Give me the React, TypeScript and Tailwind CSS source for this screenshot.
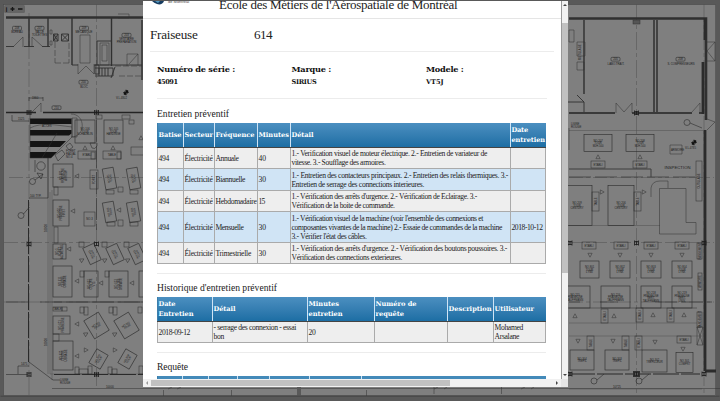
import React, { useLayoutEffect, useRef } from "react";

const SERIF = "font-['Liberation_Serif',serif]";

/* One line of text, tracked out or in so that it spans exactly w pixels. */
function Line({ w, children, className = "" }: { w: number; children: string; className?: string }) {
  const ref = useRef<HTMLSpanElement>(null);
  useLayoutEffect(() => {
    const el = ref.current;
    if (!el) return;
    el.style.letterSpacing = "0px";
    const natural = el.getBoundingClientRect().width;
    el.style.letterSpacing = `${(w - natural) / children.length}px`;
  }, [w, children]);
  return (
    <span className={`block whitespace-nowrap ${className}`}>
      <span ref={ref}>{children}</span>
    </span>
  );
}

type L = [string, number];
type Box = [number, number, number, number, string[], number?];

const machines: Box[] = [
  [75, 120, 20, 23, ["NO.106", "TOUR", "SCHAUBLIN"]],
  [104, 120, 19, 23, ["NO.105", "TOUR", "HARDINGE"]],
  [53, 164, 20, 23, ["NO.601", "FRAISEUSE", "ARROW"], 90],
  [53, 200, 16, 26, ["NO.602", "FRAISEUSE", "FIRST"], 90],
  [53, 244, 13, 15, ["NO.5", "FORET", "ALZMETALL"], 90],
  [53, 266, 19, 31, ["NO.611", "CENTRE", "USINAGE"], 90],
  [84, 271, 14, 26, ["NO.612", "CENTRE", "VT5"], 90],
  [109, 271, 19, 26, ["NO.613", "CENTRE", "USINAGE"], 90],
  [139, 271, 19, 26, ["NO.614", "CENTRE"], 90],
  [53, 316, 17, 18, ["NO.621", "FRAISEUSE"], 90],
  [53, 341, 20, 29, ["NO.622", "CENTRE", "USINAGE"], 90],
  [104, 168, 11, 21, ["NO.301", "TOUR"], -10],
  [128, 168, 11, 21, ["NO.302", "TOUR"], -10],
  [104, 202, 11, 20, ["NO.303", "TOUR"], -10],
  [128, 202, 11, 20, ["NO.304", "TOUR"], -10],
  [86, 245, 12, 18, ["NO.401", "TOUR"], -25],
  [109, 245, 12, 18, ["NO.402", "TOUR"], -25],
  [131, 245, 12, 18, ["NO.403", "TOUR"], -25],
  [88, 315, 17, 21, ["NO.501", "TOUR"], -31],
  [118, 315, 17, 21, ["NO.502", "TOUR"], -31],
  [92, 351, 13, 16, ["NO.503", "TOUR"], 30],
  [121, 351, 13, 16, ["NO.504", "TOUR"], 30],
  [584, 134.5, 28, 17, ["NO.207", "TOUR", "MJH.500"]],
  [626, 134.5, 28, 17, ["NO.208", "TOUR", "MJH.500"]],
  [562, 185.5, 30, 40, ["NO.209", "TOUR", "CENTURY"]],
  [608, 185.5, 26, 40, ["NO.206", "TOUR", "CENTURY"]],
  [580, 261, 19, 17, ["NO.801", "TOUR", "LYNX"]],
  [610, 261, 20, 17, ["NO.802", "TOUR", "LYNX"]],
  [641, 261, 20, 17, ["NO.803", "TOUR", "LYNX"]],
  [672, 261, 20, 17, ["NO.804", "TOUR", "LYNX"]],
  [560, 286, 30, 22, ["NO.215", "FRAISEUSE", "TAUFFMANN"]],
  [601, 286, 29, 22, ["NO.216", "FRAISEUSE", "TAUFFMANN"]],
  [641, 286, 20, 22, ["NO.218", "FRAISEUSE", "VERT.", "TAUFFMANN"]],
  [672, 286, 20, 22, ["NO.219", "FRAISEUSE", "VERT.", "UNIV."]],
  [570, 350, 24, 20, ["NO.304", "TREFIL"]],
  [605, 350, 24, 20, ["NO.303", "TREFIL"]],
  [642, 350, 25, 22, ["NO.302", "TREFILLEUR"]],
  [676, 352.5, 17, 20, ["NO.301", "COMPRT"]],
];

const benches: [number, number, number, number, string?, number?][] = [
  [78, 151, 18, 8, "ETABLI"], [103, 151, 18, 8, "TABLE"], [131, 147, 18, 8],
  [591, 161, 14, 7, "ETABLI"], [633, 161, 14, 7, "ETABLI"],
  [582, 242, 14, 7, "ETABLI"], [614, 242, 14, 7, "ETABLI"], [644, 242, 14, 7, "ETABLI"], [675, 242, 14, 7, "ETABLI"],
  [592, 192, 7, 19, "TABLE", 90], [634, 192, 7, 19, "TABLE", 90],
  [601, 309, 7, 14, "ETABLI", 90], [636, 308, 7, 14, "ETABLI", 90], [667, 308, 7, 14, "ETABLI", 90],
  [587, 336, 7, 14, "TABLE", 90], [622, 336, 7, 14, "TABLE", 90], [635, 336, 7, 14, "ETABLI", 90],
  [677, 336, 14, 7, "ETABLI"], [696, 161, 6, 40, "OUTILLAGE", 90],
  [697, 243, 5, 16, "RANGEMENT", 90], [698, 273, 4, 17, "ARMOIRE", 90], [697, 312, 5, 15, "RANGEMENT", 90],
  [90, 170, 8, 19, "FORET", 90], [84, 212, 11, 14, "NO.3"], [54, 227, 4, 16], [54, 187, 4, 8],
  [53, 307, 9, 4, "TABLE"], [62, 307, 5, 4], [53, 334, 6, 7], [91, 152, 4, 7], [117, 152, 4, 7],
  [107, 222, 8, 4], [118, 220, 5, 6], [130, 222, 8, 4], [106, 190, 8, 4], [118, 187, 5, 5], [130, 190, 8, 4],
  [79, 242, 5, 5], [102, 242, 5, 5], [124, 242, 5, 5], [80, 271, 4, 6], [105, 271, 4, 6],
  [80, 307, 4, 6], [84, 307, 4, 8], [109, 307, 4, 6], [113, 307, 4, 8], [138, 307, 4, 6],
  [75, 367, 4, 7], [79, 369, 9, 5], [88, 366, 4, 8], [108, 367, 4, 7], [112, 369, 5, 5], [139, 366, 4, 8],
  [96, 115, 6, 4], [122, 115, 8, 4], [129, 120, 5, 4],
];

const tris: [number, number, number][] = [
  [85, 148, 0], [113, 148, 0], [77, 176, -90], [73, 211, -90], [69, 249, -90], [77, 281, -90], [101, 283, -90],
  [132, 283, -90], [77, 324, -90], [77, 356, -90], [86, 334, 60], [115, 334, 60], [86, 350, 90], [115, 350, 90],
  [82, 260, 60], [105, 260, 60], [128, 260, 60], [119, 210, -90], [141, 138, 0],
  [598, 157, 0], [640, 157, 0], [602, 192, 90], [644, 192, 90],
  [590, 255, 180], [620, 255, 180], [651, 255, 180], [682, 255, 180],
  [575, 316, 0], [614, 316, 0], [653, 315, 0], [684, 315, 0],
  [578, 341, 180], [613, 341, 180], [655, 342, 180], [683, 349, 180],
];

const labels: [number, number, string, number][] = [
  [17, 29, "208", 1], [17, 33, "BUREAU", 0], [39.5, 29, "207", 1], [39.5, 33, "SALLE", 0], [39.5, 36, "TOILETTES", 0],
  [84, 29, "209", 1], [84, 33, "MECANIQUE", 0], [126.5, 36, "203", 1], [126.5, 40, "VESTIAIRE", 0], [126.5, 43, "PREPARATION", 0],
  [83.5, 83, "200", 1], [84, 87.5, "BLOC", 0], [56.5, 108.5, "210", 1],
  [615.5, 60, "205", 1], [616, 64.5, "LABO.TRAIT.", 0], [680.5, 60, "208", 1], [681, 64.5, "S. COMPRESSEURS", 0],
];

function FloorPlan() {
  return (
    <svg className="h-full w-full" viewBox="0 0 720 401" fill="none" stroke="#303030" strokeWidth=".5" fontFamily="Liberation Sans, sans-serif">
      <rect width="720" height="401" fill="#595959" stroke="none" />
      <rect x="3.7" y="4.7" width="712" height="391" fill="#7f7f7f" stroke="#484848" />
      <g stroke="#505050" strokeWidth=".5">
        <path d="M29 13V396M96.500 4V387M636.500 4V396M704 4V396" strokeDasharray="18 3 4 3" />
        <path d="M4 242.500H143M569 242.500H714M4 302H143M569 302H714M569 177.500H714M9 177.500H143" strokeDasharray="14 3 4 3" />
        <path d="M569 130.500H703M50 192V374H143M48 158V374M52 190V380M569 225.500H660M569 323H697M569 336H702M569 389H702M569 169H651V177" />
      </g>
      <g stroke="#404040" strokeWidth=".8">
        <path d="M96.500 120V230M569 177H696M6 302H28M40 302H143M569 302H580M600 302H618M655 302H712" strokeDasharray="22 4" />
        <path d="M569 169H651V177M54 302H143" />
      </g>
      {/* outer walls */}
      <path d="M6 17.500H143M569 18.500H706V120" stroke="#303030" strokeWidth="2.600" />
      <path d="M6 112.500H36M43 112.500H143M569 113H615M632 113H692M699 113H704" stroke="#242424" strokeWidth="1.500" />
      <path d="M705 18V40M703 62V114M705 130V371M705 371H716" stroke="#2b2b2b" strokeWidth="2.800" />
      <path d="M654 20V112M657 20V112" stroke="#303030" strokeWidth="1.500" />
      <path d="M29 18V47M48 18V47M72 18V65M111.500 18V66M142 20V80M584 20V94" stroke="#303030" strokeWidth="1.400" />
      <path d="M6 46.500H14M24 46.500H34M42 46.500H50M72 65H78M94 65H142M97 65V41H111M577 95L584 102V112M567 102H584" strokeWidth=".9" />
      <path d="M23 47V37L14 46M32 47V37L42 46M78 64V74L86 66L94 74V64M127 66V54H138V66M138 54L129 64M41 112V103L32 112M616 113V103L624 112L632 103V113M700 113V103L692 112M707 42H715V61H707M715 42L707 51L715 61M707 119L715 122L707 130" />
      <path d="M80 35h10v28H80zM100 43h9v22h-9zM102 45h5v16h-5zM50 30h2v4h-2zM50 41h2v4h-2zM569 30h5v12h-5zM577 42h8v14h-8zM577 62h7v8h-7zM72 118h5v19h-5zM118 14h11v4h-11" />
      <path d="M55 34V63M69 43V63M55 63H69M115 66H142M119 76H142" strokeDasharray="6 2" />
      <path d="M53.500 34h4.500v7h-4.500zM53.500 34l4.500 7m0-7l-4.500 7M61.500 34h7v7h-7zM61.500 34l7 7m0-7l-7 7M95 68h18v8H95M99 68v8M102 68v8M105 68v8M108 68v8M111 78l4-11M95 65h4v9h-4z" strokeWidth=".9" />
      {/* hatched loading area */}
      <path d="M30 118.500H71.500V124H30zM30 130H71.500V133.500L69 135.500H30zM30 141H66L60 147H30zM30 152H57L51 158H30z" fill="#141414" stroke="none" />
      <path d="M30 114V158L51 158L72 137V118M30 128C42 122 55 125 72 127M42 158L57 133M71 114C86 114 86 137 71 137" />
      <g stroke="#1c1c1c">
        <path d="M29 98H43M12 121H29M29 97V101M43 97V101M12 115V121M48 158V198H29M35 160V172" strokeWidth=".5" />
        <circle cx="41" cy="166" r="4.200" /><circle cx="32.500" cy="181.500" r="3" /><path d="M35 180l8-6m-6-1l6 1-2 5z" />
        <circle cx="21" cy="215.500" r="3" /><path d="M23.500 214l6-7M29 362L53 380H60M18 366H29M18 366V374M6 374.500H28" />
        <circle cx="687" cy="122.500" r="3" /><path d="M690 123L702 128" />
        <circle cx="594" cy="381" r="3" /><path d="M597 380l7-6" /><circle cx="639" cy="381" r="3" /><path d="M642 380l7-6" />
      </g>
      <path d="M54 374.500H143M569 374H700M28.500 200V362" stroke="#2a2a2a" strokeWidth="1" strokeDasharray="26 2" />
      <path d="M569 128V150" />
      {[[29, 112.500], [96.500, 112.500], [29, 244], [96.500, 244], [29, 374.500], [96.500, 374.500], [636.500, 113], [636.500, 243], [636.500, 374], [570, 243], [570, 374], [704, 243], [704, 374]].map(([x, y], i) => (
        <path key={i} d={`M${x - 2} ${y - 1.500}h4m-4 3h4M${x} ${y - 2}v4M${x - 2} ${y - 2.500}v5m4-5v5`} stroke="#1c1c1c" strokeWidth=".8" />
      ))}
      <rect x="633" y="20" width="7" height="4" fill="#555" />
      <rect x="633.5" y="371.5" width="6" height="5" strokeWidth="1" />
      {/* compass markers */}
      {[[126, 92.500], [694, 142.500]].map(([x, y], i) => (
        <g key={i} stroke="#111"><circle cx={x} cy={y} r="1.700" /><path d={`M${x - 3} ${y}h6M${x} ${y - 3}v6`} /><path d={`M${x} ${y}v-2h2v2zm0 0v2h-2v-2z`} fill="#111" /></g>
      ))}
      {/* inspection corner */}
      <path d="M651 197V188Q652 181 660 181H668V188M659.500 188.500H686V222.500H696V234H659.500zM670 145h12v9h-12zM697 327h6v18h-6zM697 327l6 18m0-18l-6 18M569 308H697" />
      <path d="M55 155l7-5 3 4-7 7zM66 146l4-3 3 4-4 3zM90 143h7v3q-2 4-5 2z" strokeWidth=".6" />
      {machines.map(([x, y, w, h, t, r = 0], i) => {
        const turned = r === 90;
        return (
          <g key={i} transform={turned ? undefined : `rotate(${r} ${x + w / 2} ${y + h / 2})`} stroke="#2a2a2a">
            <rect x={x} y={y} width={w} height={h} strokeWidth=".6" />
            <g transform={`translate(${x + w / 2} ${y + h / 2}) rotate(${turned || w < 14 ? -90 : 0})`}>
              {t.map((s, k) => (
                <text key={k} y={(k - (t.length - 1) / 2) * 2.500 + 1} fontSize="2.700" textAnchor="middle" fill="#1c1c1c" stroke="none">{s}</text>
              ))}
            </g>
          </g>
        );
      })}
      {benches.map(([x, y, w, h, s, r = 0], i) => (
        <g key={i} stroke="#2c2c2c">
          <rect x={x} y={y} width={w} height={h} />
          {s && <text transform={`translate(${x + w / 2} ${y + h / 2}) rotate(${-r})`} y="1" fontSize="2.700" textAnchor="middle" fill="#1c1c1c" stroke="none">{s}</text>}
        </g>
      ))}
      {tris.map(([x, y, r], i) => (
        <path key={i} d="M0-2.200L2.100 1.700H-2.100z" transform={`translate(${x} ${y}) rotate(${r})`} />
      ))}
      {labels.map(([x, y, s, boxed], i) => (
        <g key={i}>
          {boxed === 1 && <rect x={x - 4.500} y={y - 2.700} width="9" height="3.800" rx="1" stroke="#202020" />}
          <text x={x} y={y} fontSize={boxed ? 2.700 : 2.800} textAnchor="middle" fill="#1a1a1a" stroke="none">{s}</text>
        </g>
      ))}
      <g fill="#1c1c1c" stroke="none" fontSize="2.800">
        <text x="664.500" y="169" fontSize="4.200" textLength="26">INSPECTION</text>
        <text x="685" y="148.500">V.L.4785</text>
        <text x="116" y="98.500">V.L.4802</text>
        <text x="671" y="151">ARMOIRE</text>
        <text x="571" y="125">LIGNE</text><text x="571" y="128">ROUGE</text>
        <text x="32" y="99">1960</text><text x="18" y="120">1525</text>
        <text x="30" y="197">100 TYP.</text>
        <text x="60" y="381">LIGNE</text><text x="60" y="384">ROUGE</text>
        <text x="21" y="365">1475</text><text x="106" y="388">10000</text><text x="613" y="388">10725</text>
        <text x="66" y="152">FORET</text><text x="66" y="155">RADIAL</text><text x="66" y="158">NO.4</text>
        <text x="42" y="127">ACCES</text>
        <text transform="translate(47 232) rotate(-90)">10000</text><text transform="translate(47 346) rotate(-90)">10000</text>
        <text transform="translate(581 60) rotate(-90)">OUTILLAGE</text>
      </g>
      <path d="M52 388.500H720M163.500 390V396M231.500 390V396M366.500 390V396M434 387V394M501.500 387V394M168 389l4-2m5 2l4-2M434 389l4-2m6 2l3-2M521 389l4-2m6 2l3-2" stroke="#333" />
      <rect x="297" y="387" width="4" height="9" fill="#595959" stroke="none" />
      <rect x="4" y="5" width="21" height="8" rx="1.500" fill="#646464" stroke="none" />
      <path d="M10.500 9H14.500M12.500 7V11M18 9H22.500" stroke="#171717" strokeWidth="1.300" />
      <text x="5.500" y="11.500" fontSize="7" fontWeight="bold" fill="#1c1c1c" stroke="none">i</text>
      <path d="M.5 396.200H719.500" stroke="#444" strokeWidth="1" />
    </svg>
  );
}

const COLS1 = "grid-cols-[26px_31px_43px_33px_220px_36px]";
const COLS2 = "grid-cols-[55px_95px_67px_73px_46px_53px]";

function Head({ cells, cols }: { cells: L[][]; cols: string }) {
  return (
    <div className={`grid h-[25px] ${cols} border-b border-[#444444] bg-linear-to-b from-[#4b8fc0] to-[#1c6ea4]`}>
      {cells.map((c, i) => (
        <div key={i} className="flex flex-col justify-center border-l border-[#d0e4f5] pl-[0.5px] font-['DejaVu_Serif',serif] text-[6.6px] leading-[10.3px] font-bold text-white first:border-[#3b7fab]">
          {c.map(([s, w]) => <Line key={s} w={w}>{s}</Line>)}
        </div>
      ))}
    </div>
  );
}

function Row({ cells, cols, height, blue = false }: { cells: L[][]; cols: string; height: string; blue?: boolean }) {
  return (
    <div className={`grid ${height} ${cols} border-r border-b border-[#aaaaaa] ${blue ? "bg-[#d0e4f5]" : "bg-[#eeeeee]"}`}>
      {cells.map((c, i) => (
        <div key={i} className="flex flex-col justify-center border-l border-[#aaaaaa] pl-[0.5px] text-[7.6px] leading-[9px] text-[#222]">
          {c.map(([s, w]) => <Line key={s} w={w}>{s}</Line>)}
        </div>
      ))}
    </div>
  );
}

const rows: { h: string; freq: L; min: string; detail: L[]; date?: L }[] = [
  { h: "h-[21px]", freq: ["Annuale", 23], min: "40", detail: [["1.- Verification visuel de moteur électrique. 2.- Entretien de variateur de", 195.5], ["vitesse. 3.- Soufflage des armoires.", 94]] },
  { h: "h-[22px]", freq: ["Biannuelle", 29.5], min: "30", detail: [["1.- Entretien des contacteurs principaux. 2.- Entretien des relais thermiques. 3.-", 216.5], ["Entretien de serrage des connections interieures.", 132.5]] },
  { h: "h-[21px]", freq: ["Hebdomadaire", 41], min: "15", detail: [["1.- Vérification des arrêts d'urgence. 2.- Vérification de Eclairage. 3.-", 185.5], ["Vérification de la boite de commande.", 103]] },
  { h: "h-[31px]", freq: ["Mensuelle", 28], min: "30", detail: [["1.- Vérification visuel de la machine (voir l'ensemble des connexions et", 191.5], ["composantes vivantes de la machine) 2.- Essaie de commandes de la machine", 210.5], ["3.- Vérifier l'état des câbles.", 75]], date: ["2018-10-12", 31] },
  { h: "h-[21px]", freq: ["Trimestrielle", 35.5], min: "30", detail: [["1.- Vérification des arrêts d'urgence. 2.- Vérification des boutons poussoires. 3.-", 215.5], ["Vérification des connections exterieures.", 110.5]] },
];

const specs: { label: L; value: L; w: string }[] = [
  { label: ["Numéro de série :", 78], value: ["45091", 20.5], w: "w-[134.5px]" },
  { label: ["Marque :", 39.5], value: ["SIRIUS", 25], w: "w-[134.5px]" },
  { label: ["Modele :", 37.5], value: ["VT5J", 17.5], w: "w-[120px]" },
];

function Content() {
  return (
    <div className="h-[378px] w-[418px] overflow-hidden bg-white text-[#222]">
      <header className="flex h-[18px] items-start border-b border-[#e5e5e5]">
        <svg className="ml-2 h-[5px] w-[68px] shrink-0" viewBox="0 0 68 5">
          <path d="M1 0H13C12 3 9 4 6 3Q3 2 1 0Z" fill="#173c60" /><path d="M4 0H9L7 2Z" fill="#5298bf" />
          <text x="17" y="1.700" fontSize="4" fontFamily="Liberation Sans" fill="#444">de Montréal</text>
        </svg>
        <div className="-mt-[3px] text-[13px] leading-[13px]">
          <Line w={238.5}>École des Métiers de l'Aérospatiale de Montréal</Line>
        </div>
      </header>
      <section className="mx-[7px] flex h-[33px] items-center border-b border-[#ececec] text-[13.2px]">
        <div className="w-[104px]"><Line w={47.500}>Fraiseuse</Line></div>
        <Line w={18}>614</Line>
      </section>
      <section className="mx-[14px] flex h-[47px] border-b border-[#ececec] pt-[10px] font-['DejaVu_Serif',serif] font-bold text-[#111]">
        {specs.map((s) => (
          <div key={s.label[0]} className={s.w}>
            <Line w={s.label[1]} className="text-[8.2px] leading-[14px]">{s.label[0]}</Line>
            <Line w={s.value[1]} className="text-[6.6px] leading-[12px]">{s.value[0]}</Line>
          </div>
        ))}
      </section>
      <main className="ml-[14px] w-[389px]">
        <Line w={72} className="h-[24px] pt-[9px] text-[9.6px] leading-[12px]">Entretien préventif</Line>
        <Head cols={COLS1} cells={[[["Batise", 23]], [["Secteur", 28.500]], [["Fréquence", 39]], [["Minutes", 30.500]], [["Détail", 22]], [["Date", 16.500], ["entretien", 33.500]]]} />
        {rows.map((r, i) => (
          <Row key={i} cols={COLS1} height={r.h} blue={i % 2 === 1} cells={[[["494", 10.500]], [["Électricité", 28]], [r.freq], [[r.min, r.min === "15" ? 6 : 7.500]], r.detail, r.date ? [r.date] : []]} />
        ))}
        <div className="mt-[9px] border-t border-[#ececec]" />
        <Line w={120} className="h-[23px] pt-[8px] text-[9.6px] leading-[12px]">Historique d'entretien préventif</Line>
        <Head cols={COLS2} cells={[[["Date", 17], ["Entretien", 35]], [["Détail", 22]], [["Minutes", 30.500], ["entretien", 34]], [["Numéro de", 41], ["requête", 28.500]], [["Description", 43]], [["Utilisateur", 39.500]]]} />
        <Row cols={COLS2} height="h-[21px]" cells={[[["2018-09-12", 31.500]], [["- serrage des connexion - essai", 82.500], ["bon", 10.500]], [["20", 7]], [], [], [["Mohamed", 28.500], ["Arsalane", 24.500]]]} />
        <div className="mt-[9px] border-t border-[#ececec]" />
        <Line w={31} className="h-[23px] pt-[8px] text-[9.6px] leading-[12px]">Requête</Line>
        <div className="grid h-[8px] grid-cols-[25px_26px_29px_32px_40px_52px_185px] bg-[#438ab9]">
          {[0, 1, 2, 3, 4, 5, 6].map((n) => <i key={n} className="border-l border-[#d0e4f5] first:border-[#3b7fab]" />)}
        </div>
      </main>
    </div>
  );
}

export default function App() {
  return (
    <div className={`relative h-[401px] w-[720px] overflow-hidden ${SERIF}`}>
      <FloorPlan />
      <div className="absolute top-px left-[143px] grid h-[386px] w-[425px] grid-cols-[418px_7px] grid-rows-[378px_8px] bg-[#f1f1f1]">
        <Content />
        <div className="flex flex-col items-center justify-between border-l border-[#999] py-[3px]">
          <i className="border-x-2 border-b-2 border-x-transparent border-b-[#444]" />
          <i className="mt-[17px] mb-auto h-[250px] w-[6px] shrink-0 bg-[#c1c1c1]" />
          <i className="border-x-2 border-t-2 border-x-transparent border-t-[#444]" />
        </div>
        <div className="flex items-center pl-[3px]">
          <i className="border-y-2 border-r-2 border-y-transparent border-r-[#999]" />
          <i className="ml-[3px] h-[6px] w-[299px] bg-[#c1c1c1]" />
          <i className="mr-[3px] ml-auto border-y-2 border-l-2 border-y-transparent border-l-[#444]" />
        </div>
        <div className="bg-[#e5e5e5]" />
      </div>
    </div>
  );
}
